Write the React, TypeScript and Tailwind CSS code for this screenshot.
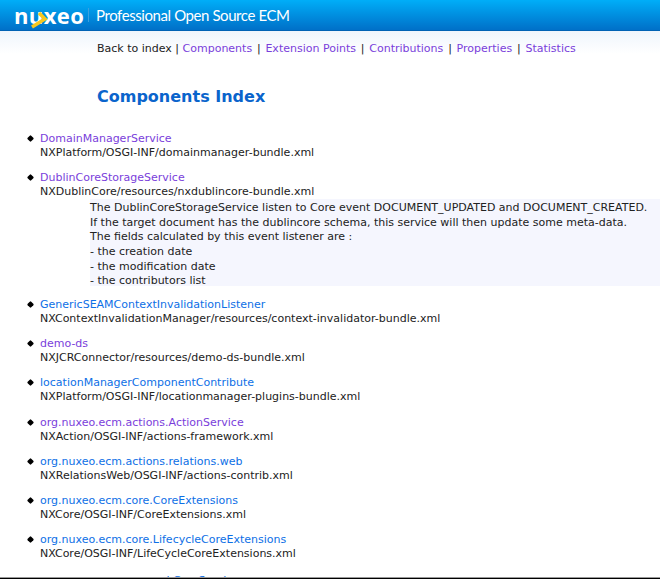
import React from "react";

const items = [
  { name: "DomainManagerService", path: "NXPlatform/OSGI-INF/domainmanager-bundle.xml", visited: true },
  {
    name: "DublinCoreStorageService",
    path: "NXDublinCore/resources/nxdublincore-bundle.xml",
    visited: true,
    doc: [
      "The DublinCoreStorageService listen to Core event DOCUMENT_UPDATED and DOCUMENT_CREATED.",
      "If the target document has the dublincore schema, this service will then update some meta-data.",
      "The fields calculated by this event listener are :",
      "- the creation date",
      "- the modification date",
      "- the contributors list",
    ],
  },
  { name: "GenericSEAMContextInvalidationListener", path: "NXContextInvalidationManager/resources/context-invalidator-bundle.xml" },
  { name: "demo-ds", path: "NXJCRConnector/resources/demo-ds-bundle.xml", visited: true },
  { name: "locationManagerComponentContribute", path: "NXPlatform/OSGI-INF/locationmanager-plugins-bundle.xml" },
  { name: "org.nuxeo.ecm.actions.ActionService", path: "NXAction/OSGI-INF/actions-framework.xml", visited: true },
  { name: "org.nuxeo.ecm.actions.relations.web", path: "NXRelationsWeb/OSGI-INF/actions-contrib.xml" },
  { name: "org.nuxeo.ecm.core.CoreExtensions", path: "NXCore/OSGI-INF/CoreExtensions.xml" },
  { name: "org.nuxeo.ecm.core.LifecycleCoreExtensions", path: "NXCore/OSGI-INF/LifeCycleCoreExtensions.xml" },
  { name: "org.nuxeo.ecm.core.api.CoreService", path: "NXCore/OSGI-INF/CoreService.xml" },
];

const navLinks = ["Components", "Extension Points", "Contributions", "Properties", "Statistics"];

const App = () => {
  return (
    <div className="h-[579px] w-[660px] overflow-hidden relative bg-white font-['DejaVu_Sans',sans-serif] text-[11px] leading-[14.6px] text-[#222]">
      <div className="h-[31px] flex items-center bg-gradient-to-b from-[#00aef8] to-[#0070c8] border-b border-[#0062b4]">
        <div className="relative ml-[14px] w-[70px]">
          <span className="font-['Open_Sans',sans-serif] font-bold text-[22px] leading-[28px] tracking-[0.4px] text-white">nuxeo</span>
          <svg className="absolute left-[14px] top-[8px]" width="22" height="22" viewBox="0 0 22 22">
            <path d="M11 4 L17 10 L4 18" fill="none" stroke="#f8c81e" strokeWidth="3.5" />
          </svg>
        </div>
        <div className="ml-[4px] h-[14px] w-px bg-[#3aa0e0]" />
        <span className="ml-[7px] font-['Lato',sans-serif] text-[15px] tracking-[-0.42px] text-white">Professional Open Source ECM</span>
      </div>

      <div className="bg-gradient-to-b from-[#eff5fc] to-white to-70% pt-[11px] pl-[97px] h-[33px]">
        Back to index
        {navLinks.map((l, i) => (
          <span key={l}>
            <span className={i > 0 ? "ml-[1.4px] mr-[1.2px]" : ""}>{" | "}</span>
            <a href="#" className="text-[#7a3edb]">{l}</a>
          </span>
        ))}
      </div>

      <h1 className="mt-[23px] ml-[97px] text-[16px] leading-[20px] font-bold text-[#0a64cc]">Components Index</h1>

      <ul className="mt-[25.1px] ml-[40px] flex flex-col gap-[11.1px] leading-[14px]">
        {items.map((it) => (
          <li key={it.name} className="relative last:mt-[2px]">
            <span className="absolute left-[-12px] top-[4px] w-[5px] h-[5px] rounded-[1px] rotate-45 bg-black" />
            <a href="#" className={it.visited ? "block text-[#7a3edb]" : "block text-[#0d6fe6]"}>{it.name}</a>
            <div>{it.path}</div>
            {it.doc && (
              <div className="ml-[50px] mb-[1px] h-[87px] pt-[2px] leading-[14.6px] bg-[#f5f6fe]">
                {it.doc.map((d) => (
                  <div key={d}>{d}</div>
                ))}
              </div>
            )}
          </li>
        ))}
      </ul>
      <div className="absolute left-0 right-0 bottom-0 h-[2px] bg-black border-t border-[#999]" />
    </div>
  );
};

export default App;
